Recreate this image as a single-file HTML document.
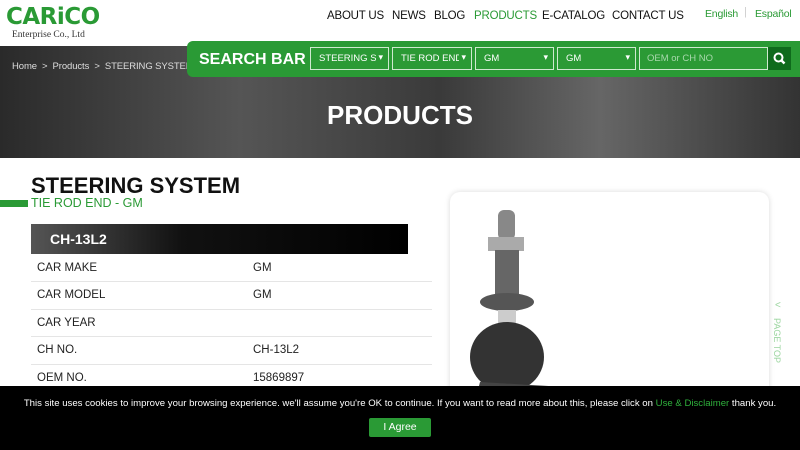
<!DOCTYPE html>
<html><head><meta charset="utf-8"><style>
*{margin:0;padding:0;box-sizing:border-box}
body{width:800px;height:450px;overflow:hidden;background:#fff;font-family:"Liberation Sans",sans-serif;position:relative}
.a{position:absolute}
.nav span{position:absolute;top:10px;font-size:11.5px;color:#111;white-space:nowrap;letter-spacing:-0.2px}
.sel{position:absolute;top:47px;height:23px;border:1px solid #cfe9cf;color:#fff;font-size:9.5px;padding:5px 8px;background:#2b9a35;white-space:nowrap;overflow:hidden}
.sel:after{content:"▾";position:absolute;right:5px;top:4px;font-size:9px;background:#2b9a35;padding-left:2px}
table{border-collapse:collapse}
td{font-size:11.5px;color:#222;height:27.5px;padding-left:6px;border-bottom:1px solid #e5e5e5}
</style></head><body>
<div class="a" style="left:6px;top:4px;font-size:23px;font-weight:bold;color:#2a9a35;font-family:'DejaVu Sans',sans-serif;letter-spacing:-0.5px">CARiCO</div>
<div class="a" style="left:12px;top:30px;font-size:9.5px;font-family:'Liberation Serif',serif;color:#333">Enterprise Co., Ltd</div>
<div class="nav">
<span style="left:327px">ABOUT US</span><span style="left:392px">NEWS</span><span style="left:434px">BLOG</span><span style="left:474px;color:#2a9a35">PRODUCTS</span><span style="left:542px">E-CATALOG</span><span style="left:612px">CONTACT US</span>
<span style="left:705px;top:8px;font-size:10.5px;color:#2a9a35">English</span><span style="left:744px;top:6px;color:#ccc;font-size:11px">|</span><span style="left:755px;top:8px;font-size:10.5px;color:#2a9a35">Español</span></div>
<div class="a" style="left:0;top:46px;width:800px;height:112px;background:linear-gradient(90deg,#2a2a2a,#555 30%,#3a3a3a 55%,#666 75%,#333)"></div>
<div class="a" style="left:12px;top:61px;font-size:9.5px;color:#ddd;white-space:nowrap;letter-spacing:-0.1px">Home &nbsp;&gt;&nbsp; Products &nbsp;&gt;&nbsp; STEERING SYSTEM</div>
<div class="a" style="left:187px;top:41px;width:613px;height:36px;background:#2a9a35;border-radius:6px 0 0 6px"></div>
<div class="a" style="left:199px;top:51px;font-size:16px;font-weight:bold;color:#fff;white-space:nowrap">SEARCH BAR</div>
<div class="sel" style="left:310px;width:79px">STEERING SY</div>
<div class="sel" style="left:392px;width:80px">TIE ROD END</div>
<div class="sel" style="left:475px;width:79px">GM</div>
<div class="sel" style="left:557px;width:79px">GM</div>
<div class="a" style="left:639px;top:47px;width:129px;height:23px;border:1px solid #cfe9cf;background:#2b9a35;color:#a9d8ad;font-size:9.5px;padding:5px 7px">OEM or CH NO</div>
<div class="a" style="left:768px;top:47px;width:23px;height:23px;background:#0f6b1c"><svg width="23" height="23"><circle cx="10.5" cy="10.5" r="4" stroke="#fff" stroke-width="2" fill="none"/><line x1="13.5" y1="13.5" x2="16.5" y2="16.5" stroke="#fff" stroke-width="2.5"/></svg></div>
<div class="a" style="left:0;top:100px;width:800px;text-align:center;font-size:26px;font-weight:bold;color:#fff">PRODUCTS</div>
<div class="a" style="left:31px;top:173px;font-size:22px;font-weight:bold;color:#111">STEERING SYSTEM</div>
<div class="a" style="left:0;top:200px;width:28px;height:7px;background:#2a9a35"></div>
<div class="a" style="left:31px;top:196px;font-size:12.5px;color:#2a9a35">TIE ROD END - GM</div>
<div class="a" style="left:31px;top:224px;width:377px;height:30px;background:linear-gradient(90deg,#555,#111 40%,#000);color:#fff;font-weight:bold;font-size:14px;padding:7px 19px">CH-13L2</div>
<table class="a" style="left:31px;top:254px;width:401px">
<tr><td style="width:216px">CAR MAKE</td><td>GM</td></tr>
<tr><td>CAR MODEL</td><td>GM</td></tr>
<tr><td>CAR YEAR</td><td></td></tr>
<tr><td>CH NO.</td><td>CH-13L2</td></tr>
<tr><td>OEM NO.</td><td>15869897</td></tr>
</table>
<div class="a" style="left:450px;top:192px;width:319px;height:220px;border-radius:10px;box-shadow:0 0 6px rgba(0,0,0,.15);background:#fff;overflow:hidden">
<svg width="319" height="220" viewBox="0 0 319 220"><rect x="48" y="18" width="17" height="30" rx="6" fill="#888"/><rect x="38" y="45" width="36" height="14" fill="#aaa"/><rect x="45" y="58" width="24" height="50" fill="#666"/><ellipse cx="57" cy="110" rx="27" ry="9" fill="#555"/><rect x="48" y="118" width="18" height="20" fill="#ccc"/><ellipse cx="57" cy="165" rx="37" ry="35" fill="#333"/><path d="M30 190 L200 200 L240 230 L20 230Z" fill="#444"/></svg></div>
<div class="a" style="left:775px;top:300px;color:#9bd59f;font-size:10px">&lt;</div>
<div class="a" style="left:757px;top:333px;width:40px;color:#9bd59f;font-size:9px;transform:rotate(90deg);white-space:nowrap;text-align:center">PAGE TOP</div>
<div class="a" style="left:0;top:386px;width:800px;height:64px;background:#000"></div>
<div class="a" style="left:0;top:398px;width:800px;text-align:center;color:#fff;font-size:9.6px;white-space:nowrap">This site uses cookies to improve your browsing experience. we'll assume you're OK to continue. If you want to read more about this, please click on <span style="color:#2fb03c">Use &amp; Disclaimer</span> thank you.</div>
<div class="a" style="left:369px;top:418px;width:62px;height:19px;background:#2a9a35;color:#fff;font-size:10.5px;text-align:center;line-height:19px;border-radius:2px">I Agree</div>
</body></html>
